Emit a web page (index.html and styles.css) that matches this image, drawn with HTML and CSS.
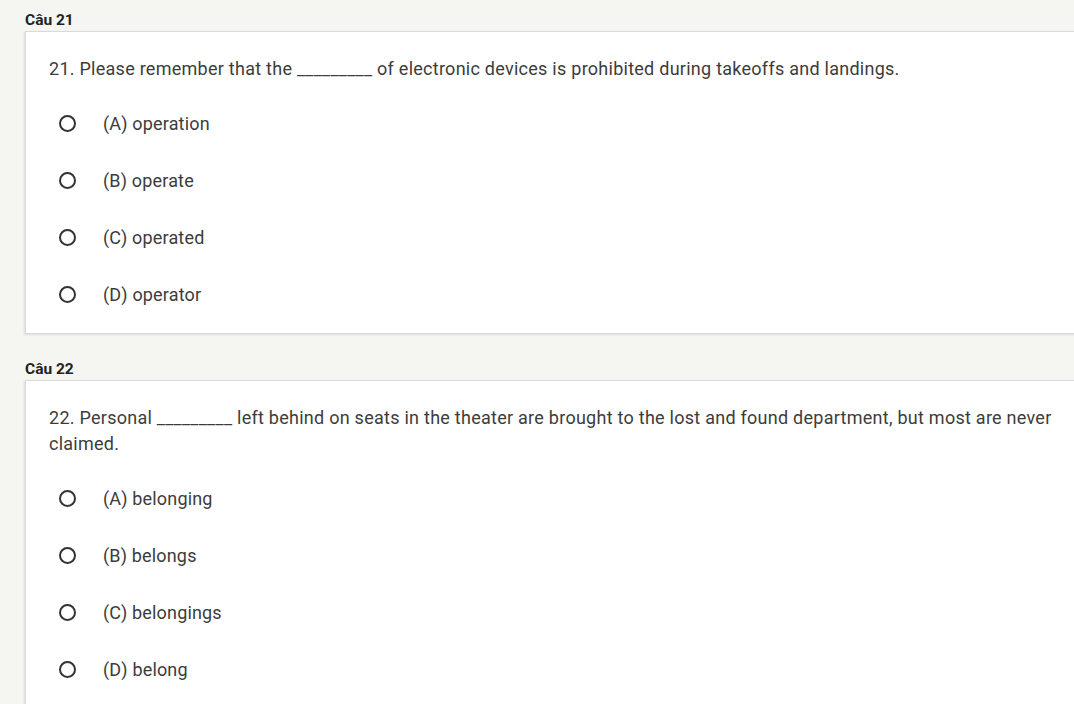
FILE: index.html
```html
<!DOCTYPE html>
<html>
<head>
<meta charset="utf-8">
<link rel="stylesheet" href="styles.css">
</head>
<body>
<div class="page">
  <section class="q">
    <div class="q-label">Câu 21</div>
    <div class="card">
      <div class="q-text">21. Please remember that the _________ of electronic devices is prohibited during takeoffs and landings.</div>
      <div class="options">
        <label class="opt"><span class="radio"></span><span class="opt-text">(A) operation</span></label>
        <label class="opt"><span class="radio"></span><span class="opt-text">(B) operate</span></label>
        <label class="opt"><span class="radio"></span><span class="opt-text">(C) operated</span></label>
        <label class="opt"><span class="radio"></span><span class="opt-text">(D) operator</span></label>
      </div>
    </div>
  </section>
  <section class="q">
    <div class="q-label">Câu 22</div>
    <div class="card">
      <div class="q-text">22. Personal _________ left behind on seats in the theater are brought to the lost and found department, but most are never claimed.</div>
      <div class="options">
        <label class="opt"><span class="radio"></span><span class="opt-text">(A) belonging</span></label>
        <label class="opt"><span class="radio"></span><span class="opt-text">(B) belongs</span></label>
        <label class="opt"><span class="radio"></span><span class="opt-text">(C) belongings</span></label>
        <label class="opt"><span class="radio"></span><span class="opt-text">(D) belong</span></label>
      </div>
    </div>
  </section>
</div>
</body>
</html>
```
FILE: styles.css
```css
html, body {
  margin: 0;
  padding: 0;
  background: #f5f5f2;
  overflow: hidden;
}
body {
  font-family: Roboto, "Liberation Sans", sans-serif;
  color: #3c3c3c;
}
.page {
  padding: 10px 0 0 25px;
}
.q + .q {
  margin-top: 25px;
}
.q-label {
  font-size: 15.5px;
  font-weight: bold;
  line-height: 21px;
  color: #222;
}
.card {
  width: 1080px;
  background: #fff;
  border: 1px solid #dadada;
  box-shadow: -1px 1px 2px rgba(0,0,0,0.10);
  padding: 24px 0 10px 23px;
  box-sizing: border-box;
}
.q-text {
  font-size: 18px;
  letter-spacing: 0.26px;
  line-height: 26px;
  padding-right: 10px;
}
.options {
  margin-top: 13px;
}
.opt {
  display: flex;
  align-items: center;
  height: 57px;
  font-size: 18px;
  letter-spacing: 0.17px;
}
.radio {
  width: 17px;
  height: 17px;
  box-sizing: border-box;
  border: 2px solid #333;
  border-radius: 50%;
  margin-left: 10px;
  margin-right: 27px;
  flex: none;
}
```
